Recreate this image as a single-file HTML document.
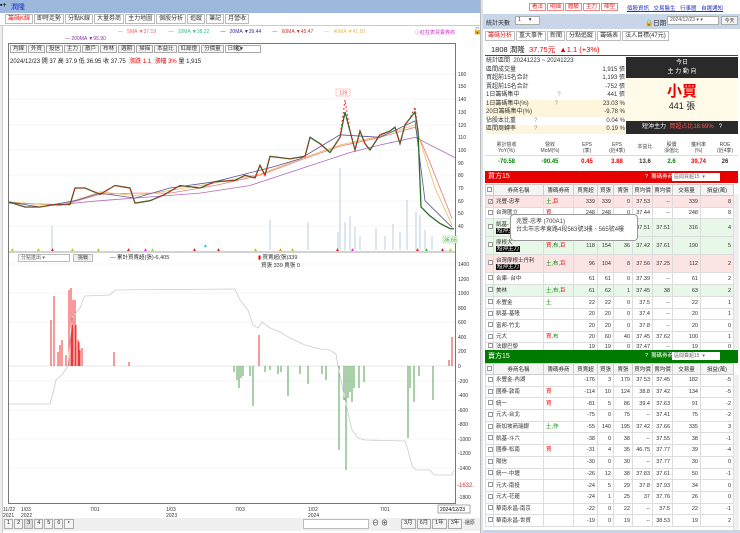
<!DOCTYPE html>
<html><head><meta charset="utf-8"><style>
*{margin:0;padding:0;box-sizing:border-box}
body{width:740px;height:533px;overflow:hidden;background:#fff;font-family:"Liberation Sans","Noto Sans CJK TC",sans-serif;font-size:6px;color:#333;position:relative}
.a{position:absolute}
.tab{display:inline-block;border:1px solid #bbb;background:#fff;padding:0 2px;height:10px;line-height:9px;font-size:6px;margin-right:1px}
.btn{display:inline-block;border:1px solid #aaa;background:#f4f4f4;padding:0 2px;height:8px;line-height:7px;font-size:5.5px;margin-right:1px}
table{border-collapse:collapse;table-layout:fixed;position:absolute;left:485px;width:248px;font-size:5.5px}
td{border:1px solid #ddd;text-align:right;padding:0 2px;white-space:nowrap;overflow:hidden;vertical-align:middle;line-height:6px}
td.l{text-align:left}
th{border:1px solid #ccc;font-weight:normal;background:#f4f4f4;height:11px}
.cb{display:inline-block;width:5px;height:5px;border:1px solid #999;background:#fff;font-size:4px;line-height:4px}
.r{color:#e00}.g{color:#080}
.bk{background:#111;color:#fff;padding:0 1px}
</style></head><body>
<div class="a" style="left:0;top:0;width:480px;height:13px;background:#9cb9dd"></div>
<div class="a" style="left:0;top:2px;font-size:7px;color:#000">▪+</div>
<div class="a" style="left:11px;top:2px;font-size:7px;color:#1a2fd0">潤隆</div>
<div class="a" style="left:5px;top:14px;"><span class="tab" style="color:#d22">籌碼K線</span><span class="tab">即時走勢</span><span class="tab">分點K線</span><span class="tab">大量券商</span><span class="tab">主力地圖</span><span class="tab">個股分析</span><span class="tab">追蹤</span><span class="tab">筆記</span><span class="tab">月營收</span></div>
<div class="a" style="left:0;top:25px;width:480px;height:1px;background:#ccc"></div>
<div class="a" style="left:0;top:26px;width:3px;height:507px;background:#eee;border-right:1px solid #ccc"></div>
<div class="a" style="left:118px;top:29px;font-size:5px;white-space:pre"><span style="color:#e66">—</span>   <span style="color:#e66">5MA ▼37.19</span>         <span style="color:#3b9">—</span>   <span style="color:#3b9">10MA ▼38.22</span>        <span style="color:#339">—</span>   <span style="color:#339">20MA ▼39.44</span>        <span style="color:#c33">—</span>   <span style="color:#c33">60MA ▼45.47</span>        <span style="color:#eb5">—</span>   <span style="color:#eb5">40MA ▼41.50</span></div>
<div class="a" style="left:415px;top:29px;font-size:5px;color:#c3c">ⓘ紅柱表買賣券商</div>
<div class="a" style="left:473px;top:27px;font-size:7px">🔓</div>
<div class="a" style="left:65px;top:36px;font-size:5px;color:#839"><span>—</span>   200MA ▼95.90</div>
<div class="a" style="left:8px;top:43px;width:448px;height:461px;border:1px solid #777"></div>
<div class="a" style="left:10px;top:45px;"><span class="btn">均線</span><span class="btn">外資</span><span class="btn">投信</span><span class="btn">主力</span><span class="btn">散戶</span><span class="btn">布林</span><span class="btn">週期</span><span class="btn">掃描</span><span class="btn">本益比</span><span class="btn">紅綠燈</span><span class="btn">分價量</span><span class="btn" style="width:36px;background:#fff">日線 ▾</span></div>
<div class="a" style="left:235px;top:44px;font-size:8px;color:#555">⚙</div>
<div class="a" style="left:10px;top:56px;font-size:6px;color:#222">2024/12/23 開 37 高 37.9 低 36.95 收 37.75 <span class="r">&nbsp;漲跌 1.1&nbsp; 漲幅 3%</span> 量 1,915</div>
<svg class="a" style="left:0;top:0" width="480" height="533">
<g stroke="#eee" stroke-width="0.6">
<line x1="9" y1="74" x2="455" y2="74"/><line x1="9" y1="99" x2="455" y2="99"/><line x1="9" y1="125" x2="455" y2="125"/><line x1="9" y1="150" x2="455" y2="150"/><line x1="9" y1="175" x2="455" y2="175"/><line x1="9" y1="201" x2="455" y2="201"/><line x1="9" y1="226" x2="455" y2="226"/>
<line x1="9" y1="264" x2="455" y2="264"/><line x1="9" y1="293" x2="455" y2="293"/><line x1="9" y1="322" x2="455" y2="322"/><line x1="9" y1="381" x2="455" y2="381"/><line x1="9" y1="410" x2="455" y2="410"/><line x1="9" y1="439" x2="455" y2="439"/><line x1="9" y1="468" x2="455" y2="468"/>
</g>
<line x1="9" y1="252" x2="455" y2="252" stroke="#888" stroke-width="0.8"/>
<g stroke="#a9c4dc" stroke-width="0.8">
<line x1="52" y1="250" x2="52" y2="226"/><line x1="270" y1="250" x2="270" y2="220"/><line x1="308" y1="250" x2="308" y2="222"/><line x1="340" y1="250" x2="340" y2="168"/><line x1="345" y1="250" x2="345" y2="222"/><line x1="350" y1="250" x2="350" y2="216"/><line x1="355" y1="250" x2="355" y2="227"/><line x1="376" y1="250" x2="376" y2="228"/><line x1="393" y1="250" x2="393" y2="224"/><line x1="407" y1="250" x2="407" y2="200"/><line x1="416" y1="250" x2="416" y2="212"/><line x1="420" y1="250" x2="420" y2="215"/><line x1="425" y1="250" x2="425" y2="230"/><line x1="432" y1="250" x2="432" y2="236"/><line x1="338" y1="250" x2="338" y2="232"/><line x1="360" y1="250" x2="360" y2="236"/><line x1="385" y1="250" x2="385" y2="236"/><line x1="400" y1="250" x2="400" y2="232"/>
</g>
<g fill="none" stroke-width="0.8">
<polyline stroke="#b06bc0" points="9,203.2 60,204.5 100,200.7 150,196.9 200,193.1 250,185.5 300,169 350,152.5 380,145 415,137.3 455,157.6"/>
<polyline stroke="#e77" points="9,202 60,205.7 100,194.3 135,193.1 170,193.1 215,185.5 260,175.3 300,160.1 340,146.2 380,137.3 415,127.2 430,162.7 452,218.4"/>
<polyline stroke="#eb5" points="9,202 60,205.7 100,191.8 135,195.6 170,190.5 215,183 260,174.1 300,158.9 340,145 380,136.1 415,124.7 435,188 452,224.8"/>
<polyline stroke="#559" points="9,202 40,207 75,200.7 100,193.1 135,198.1 170,188 215,181.7 270,167.7 300,158.9 340,134.8 380,137.3 415,120.9 425,200.7 452,227.3"/>
<polyline stroke="#2a6a2a" stroke-width="1.3" points="9,202 25,207 40,207 55,204.5 70,204.5 75,188 85,188 100,194.3 115,185.5 130,188 135,203.2 150,200.7 165,194.3 180,185.5 200,188 215,181.7 235,180.4 245,175.3 255,177.9 260,165.2 265,175.3 270,156.3 290,158.9 305,156.3 310,137.3 320,143.7 330,152.5 340,137.3 345,112 350,131 355,150 360,131 365,143.7 370,150 380,134.8 390,131 395,127.2 400,143.7 405,124.7 410,118.4 415,112 418,131 421,207 430,215.9 440,223.5 450,228.6 454,228.9"/>
<polyline stroke="#e22" stroke-width="1.2" stroke-dasharray="1.5 2.5" points="9,202 25,207 40,207 55,204.5 70,204.5 75,188 85,188 100,194.3 115,185.5 130,188 135,203.2 150,200.7 165,194.3 180,185.5 200,188 215,181.7 235,180.4 245,175.3 255,177.9 260,165.2 265,175.3 270,156.3 290,158.9 305,156.3 310,137.3 320,143.7 330,152.5 340,137.3 345,100 350,131 355,150 360,131 365,143.7 370,150 380,134.8 390,131 395,127.2 400,143.7 405,124.7 410,118.4 415,107 418,131"/>
</g>
<rect x="336" y="89" width="14" height="7" fill="#fff" stroke="#f99" stroke-width="0.5"/><text x="339" y="94.5" font-size="5" fill="#e55">139</text>
<rect x="443" y="236" width="14" height="7" fill="#efe" stroke="#9c9" stroke-width="0.5"/><text x="444" y="241.5" font-size="5" fill="#393">36.65</text>
<g font-size="5">
<text x="10" y="251" fill="#9d2">▲</text><text x="36" y="251" fill="#9d2">▲</text><text x="50" y="251" fill="#d22">▲</text><text x="70" y="251" fill="#9d2">▲</text><text x="96" y="251" fill="#9d2">▲</text><text x="126" y="251" fill="#d22">▲</text><text x="143" y="251" fill="#d3d">▲</text><text x="150" y="251" fill="#9d2">▲</text><text x="192" y="251" fill="#d22">▲</text><text x="203" y="247" fill="#3bb">▲</text><text x="216" y="251" fill="#d22">▲</text><text x="253" y="251" fill="#9d2">▲</text><text x="278" y="251" fill="#e90">▲</text><text x="290" y="251" fill="#9d2">▲</text><text x="335" y="251" fill="#d22">▲</text><text x="350" y="251" fill="#d3d">▲</text><text x="415" y="251" fill="#d22">▲</text><text x="424" y="251" fill="#3c3">▲</text><text x="440" y="251" fill="#d22">▲</text><text x="448" y="251" fill="#9d2">▲</text>
</g>
<line x1="9" y1="366" x2="455" y2="366" stroke="#ccc" stroke-width="0.5"/>
<g stroke="#e00" stroke-width="0.8">
<line x1="51" y1="366" x2="51" y2="320"/><line x1="54" y1="366" x2="54" y2="296"/><line x1="58" y1="366" x2="58" y2="352"/><line x1="60" y1="366" x2="60" y2="345"/><line x1="62" y1="366" x2="62" y2="340"/><line x1="66" y1="366" x2="66" y2="355"/><line x1="69" y1="366" x2="69" y2="290"/><line x1="71" y1="366" x2="71" y2="288"/><line x1="72" y1="366" x2="72" y2="325"/><line x1="73" y1="366" x2="73" y2="300"/><line x1="75" y1="366" x2="75" y2="300"/><line x1="76" y1="366" x2="76" y2="325"/><line x1="78" y1="366" x2="78" y2="340"/><line x1="79" y1="366" x2="79" y2="342"/><line x1="80" y1="366" x2="80" y2="350"/><line x1="82" y1="366" x2="82" y2="348"/><line x1="114" y1="366" x2="114" y2="352"/><line x1="129" y1="366" x2="129" y2="362"/><line x1="259" y1="366" x2="259" y2="335"/><line x1="452" y1="366" x2="452" y2="337"/><line x1="449" y1="366" x2="449" y2="360"/>
</g>
<g stroke="#2a8a2a" stroke-width="0.8">
<line x1="234" y1="366" x2="234" y2="372"/><line x1="237" y1="366" x2="237" y2="380"/><line x1="239" y1="366" x2="239" y2="388"/><line x1="241" y1="366" x2="241" y2="378"/><line x1="243" y1="366" x2="243" y2="376"/><line x1="250" y1="366" x2="250" y2="376"/><line x1="253" y1="366" x2="253" y2="406"/><line x1="265" y1="366" x2="265" y2="372"/><line x1="270" y1="366" x2="270" y2="370"/><line x1="278" y1="366" x2="278" y2="374"/><line x1="281" y1="366" x2="281" y2="372"/><line x1="288" y1="366" x2="288" y2="396"/><line x1="300" y1="366" x2="300" y2="374"/><line x1="308" y1="366" x2="308" y2="384"/><line x1="322" y1="366" x2="322" y2="374"/><line x1="326" y1="366" x2="326" y2="380"/><line x1="339" y1="366" x2="339" y2="450"/><line x1="344" y1="366" x2="344" y2="400"/><line x1="346" y1="366" x2="346" y2="470"/><line x1="348" y1="366" x2="348" y2="398"/><line x1="350" y1="366" x2="350" y2="392"/><line x1="352" y1="366" x2="352" y2="402"/><line x1="354" y1="366" x2="354" y2="388"/><line x1="359" y1="366" x2="359" y2="388"/><line x1="364" y1="366" x2="364" y2="382"/><line x1="408" y1="366" x2="408" y2="438"/><line x1="410" y1="366" x2="410" y2="388"/><line x1="414" y1="366" x2="414" y2="402"/><line x1="419" y1="366" x2="419" y2="376"/><line x1="433" y1="366" x2="433" y2="400"/>
</g>
<polyline fill="none" stroke="#ccc" stroke-width="0.8" points="9,404 50,404 53,393 56,380 62,375 68,366 72,318 80,308 83,300 85,296 110,295 115,290 235,289 240,300 248,310 253,325 258,328 262,322 270,328 280,332 290,338 305,345 320,349 330,350 336,354 338,366 346,404 352,430 358,438 365,440 405,441 408,450 412,466 416,470 430,470 434,475 452,475 454,470"/>
<g font-size="5" fill="#333">
<text x="458" y="76">160</text><text x="458" y="88">150</text><text x="458" y="101">140</text><text x="458" y="114">130</text><text x="458" y="127">120</text><text x="458" y="139">110</text><text x="458" y="152">100</text><text x="458" y="165">90</text><text x="458" y="177">80</text><text x="458" y="190">70</text><text x="458" y="203">60</text><text x="458" y="215">50</text><text x="458" y="228">40</text>
<text x="458" y="266">1400</text><text x="458" y="281">1200</text><text x="458" y="295">1000</text><text x="458" y="310">800</text><text x="458" y="324">600</text><text x="458" y="339">400</text><text x="458" y="353">200</text><text x="458" y="368">0</text><text x="458" y="383">-200</text><text x="458" y="397">-400</text><text x="458" y="412">-600</text><text x="458" y="426">-800</text><text x="458" y="441">-1000</text><text x="458" y="455">-1200</text><text x="458" y="470">-1400</text><text x="458" y="499">-1800</text>
<text x="457" y="487" fill="#c33" font-size="6">-1632.</text>
<text x="3" y="511">11/22</text><text x="3" y="517">2021</text><text x="21" y="511">1/03</text><text x="21" y="517">2022</text><text x="90" y="511">7/01</text><text x="166" y="511">1/03</text><text x="166" y="517">2023</text><text x="235" y="511">7/03</text><text x="308" y="511">1/02</text><text x="308" y="517">2024</text><text x="380" y="511">7/01</text>
</g>
<rect x="438" y="505" width="32" height="8" fill="#fff" stroke="#555" stroke-width="0.5"/><text x="440" y="511" font-size="5">2024/12/23</text>
</svg>
<div class="a" style="left:18px;top:254px;width:52px;height:8px;border:1px solid #bbb;font-size:5px;padding-left:2px;line-height:7px;color:#555">分點進出 ▾</div>
<div class="a" style="left:73px;top:254px;width:20px;height:8px;border:1px solid #bbb;background:#f0f0f0;font-size:5px;line-height:7px;text-align:center">挑戰</div>
<div class="a" style="left:110px;top:253px;font-size:5.5px">— 累計買賣超(張)-6,405</div>
<div class="a" style="left:258px;top:253px;font-size:5.5px"><span class="r">▮</span> 買賣超(張)339<br>&nbsp;&nbsp;買張 339 賣張 0</div>
<div class="a" style="left:3px;top:518px;width:477px;height:13px;background:#f0f0f0"></div>
<div class="a" style="left:4px;top:519px;"><span class="btn" style="height:10px">1</span><span class="btn" style="height:10px">2</span><span class="btn" style="height:10px;background:#ddd">3</span><span class="btn" style="height:10px">4</span><span class="btn" style="height:10px">5</span><span class="btn" style="height:10px">6</span><span class="btn" style="height:10px">‣</span></div>
<div class="a" style="left:303px;top:519px;width:66px;height:10px;border:1px solid #bbb;background:#fff"></div>
<div class="a" style="left:372px;top:518px;font-size:7px">⊖ ⊕</div>
<div class="a" style="left:401px;top:519px;"><span class="btn" style="height:10px">3月</span><span class="btn" style="height:10px">6月</span><span class="btn" style="height:10px">1年</span><span class="btn" style="height:10px">3年</span><span style="font-size:5px">·還原</span></div>
<div class="a" style="left:480px;top:0;width:3px;height:533px;background:#dde3ec;border-left:1px solid #bbb"></div>
<div class="a" style="left:529px;top:3px;color:#d22"><span class="btn" style="border-color:#e88;background:#fff">看法</span><span class="btn" style="border-color:#e88;background:#fff">明細</span><span class="btn" style="border-color:#e88;background:#fff">體驗</span><span class="btn" style="border-color:#e88;background:#fff">主力</span><span class="btn" style="border-color:#e88;background:#fff">陣型</span></div>
<div class="a" style="left:627px;top:4px;font-size:5.5px;color:#23b;text-decoration:underline;word-spacing:3px">個股資訊 交易醫生 行事曆 自選通知</div>
<div class="a" style="left:483px;top:14px;width:257px;height:15px;background:#c8d6e8"></div>
<div class="a" style="left:486px;top:18px;font-size:6px">統計天數</div>
<div class="a" style="left:515px;top:16px;width:25px;height:9px;background:#fff;border:1px solid #aaa;font-size:5.5px;padding-left:2px">1 &nbsp;&nbsp;&nbsp;&nbsp;▾</div>
<div class="a" style="left:645px;top:17px;font-size:6.5px">🔒日期</div>
<div class="a" style="left:667px;top:16px;width:52px;height:9px;background:#fff;border:1px solid #aaa;font-size:5px;padding-left:2px;color:#555">2024/12/23 ▾ ▾</div>
<div class="a" style="left:721px;top:16px;width:17px;height:9px;background:#f4f4f4;border:1px solid #aaa;font-size:5px;text-align:center">今天</div>
<div class="a" style="left:485px;top:31px;"><span class="tab" style="color:#d22">籌碼分析</span><span class="tab">重大事件</span><span class="tab">新聞</span><span class="tab">分點追蹤</span><span class="tab">籌碼表</span><span class="tab">法人目標(47元)</span></div>
<div class="a" style="left:491px;top:44px;font-size:7.5px;color:#222">1808 潤隆 <span class="r">&nbsp;37.75元 &nbsp;▲1.1 (+3%)</span></div>
<div class="a" style="left:485px;top:55px;width:253px;height:1px;background:#e00"></div>
<div class="a" style="left:486px;top:57px;width:139px;font-size:6px;line-height:8.5px">
<div>統計區間 &nbsp;20241223 ~ 20241223</div>
<div>區間成交量<span style="float:right">1,915 張</span></div>
<div>買超前15名合計<span style="float:right">1,193 張</span></div>
<div>賣超前15名合計<span style="float:right">-752 張</span></div>
<div>1日籌碼集中<span style="margin-left:38px;color:#999">?</span><span style="float:right">441 張</span></div>
<div style="background:#fdf6dc">1日籌碼集中(%)<span style="margin-left:26px;color:#999">?</span><span style="float:right">23.03 %</span></div>
<div style="background:#fdf6dc">20日籌碼集中(%)<span style="float:right">-9.78 %</span></div>
<div>佔股本比重<span style="margin-left:18px;color:#999">?</span><span style="float:right">0.04 %</span></div>
<div style="background:#fdf6dc">區間周轉率<span style="margin-left:18px;color:#999">?</span><span style="float:right">0.19 %</span></div>
</div>
<div class="a" style="left:626px;top:57px;width:112px;height:21px;background:#2a2a2a;color:#fff;text-align:center;font-size:6px;line-height:9px;padding-top:2px">今日<br>主 力 動 向</div>
<div class="a" style="left:626px;top:78px;width:112px;height:43px;background:#fffbe8;text-align:center">
<div style="color:#e00;font-size:15px;line-height:18px;margin-top:5px;font-weight:bold">小買</div>
<div style="font-size:9px;line-height:11px;color:#222">441 張</div></div>
<div class="a" style="left:626px;top:121px;width:112px;height:13px;background:#2a2a2a;color:#fff;font-size:6px;line-height:13px;padding-left:16px">短沖主力 &nbsp;<span style="color:#f55">買超占比18.69%</span> &nbsp;&nbsp;?</div>
<div class="a" style="left:485px;top:139px;width:253px;height:31px;font-size:5px;text-align:center">
<div style="display:flex;height:17px;line-height:6px;border-bottom:1px solid #ddd;color:#444">
<div style="width:43px;padding-top:3px">累計營收<br>YoY(%)</div><div style="width:44px;padding-top:3px">營收<br>MoM(%)</div><div style="width:30px;padding-top:3px">EPS<br>(季)</div><div style="width:30px;padding-top:3px">EPS<br>(近4季)</div><div style="width:26px;padding-top:5px">本益比</div><div style="width:27px;padding-top:3px">股價<br>淨值比</div><div style="width:27px;padding-top:3px">獲利率<br>(%)</div><div style="width:26px;padding-top:3px">ROE<br>(近4季)</div></div>
<div style="display:flex;font-size:6px;font-weight:bold;line-height:12px">
<div style="width:43px" class="g">-70.58</div><div style="width:44px" class="g">-90.45</div><div style="width:30px" class="r">0.45</div><div style="width:30px" class="r">3.88</div><div style="width:26px">13.6</div><div style="width:27px" class="g">2.6</div><div style="width:27px" class="r">39.74</div><div style="width:26px">26</div></div></div>
<div class="a" style="left:485px;top:171px;width:253px;height:12px;background:#e60000;color:#fff;font-size:7px;line-height:12px;padding-left:3px">買方15<span style="position:absolute;left:160px;font-size:5.5px">? &nbsp;籌碼券商:</span></div>
<div class="a" style="left:672px;top:173px;width:48px;height:8px;background:#fff;font-size:5px;color:#666;padding-left:2px">區間買超15 &nbsp;▾</div>
<table style="top:184px">
<colgroup><col style="width:8px"><col style="width:50px"><col style="width:30px"><col style="width:24px"><col style="width:16px"><col style="width:19px"><col style="width:20px"><col style="width:20px"><col style="width:28px"><col style="width:33px"></colgroup>
<tr><th><span class="cb"></span></th><th>券商名稱</th><th>籌碼券商</th><th>買賣超</th><th>買張</th><th>賣張</th><th>買均價</th><th>賣均價</th><th>交易量</th><th>損益(萬)</th></tr>
<tr style="height:12px;background:#fde4e4"><td><span class="cb">✓</span></td><td class="l">兆豐-忠孝</td><td class="l"><span class="g">土</span><span class="r">,巨</span></td><td>339</td><td>339</td><td>0</td><td>37.53</td><td>--</td><td>339</td><td>8</td></tr>
<tr style="height:11px"><td><span class="cb"></span></td><td class="l">台灣匯立</td><td class="l r">買</td><td>248</td><td>248</td><td>0</td><td>37.44</td><td>--</td><td>248</td><td>8</td></tr>
<tr style="height:18px;background:#e8f8e8"><td><span class="cb"></span></td><td class="l">凱基-<br><span class="bk">短沖主</span></td><td></td><td></td><td></td><td></td><td>37.51</td><td>37.51</td><td>316</td><td>4</td></tr>
<tr style="height:18px;background:#e8f8e8"><td><span class="cb"></span></td><td class="l">摩根大<br><span class="bk">短沖主力</span></td><td class="l"><span class="r">買</span><span class="g">,布,</span><span class="r">巨</span></td><td>118</td><td>154</td><td>36</td><td>37.42</td><td>37.61</td><td>190</td><td>5</td></tr>
<tr style="height:18px;background:#fde4e4"><td><span class="cb"></span></td><td class="l">台灣摩根士丹利<br><span class="bk">短沖主力</span></td><td class="l"><span class="g">土,布,</span><span class="r">巨</span></td><td>96</td><td>104</td><td>8</td><td>37.56</td><td>37.25</td><td>112</td><td>2</td></tr>
<tr style="height:12px"><td><span class="cb"></span></td><td class="l">合庫- 台中</td><td></td><td>61</td><td>61</td><td>0</td><td>37.39</td><td>--</td><td>61</td><td>2</td></tr>
<tr style="height:12px;background:#e8f8e8"><td><span class="cb"></span></td><td class="l">美林</td><td class="l"><span class="g">土,布,</span><span class="r">巨</span></td><td>61</td><td>62</td><td>1</td><td>37.45</td><td>38</td><td>63</td><td>2</td></tr>
<tr style="height:12px"><td><span class="cb"></span></td><td class="l">永豐金</td><td class="l g">土</td><td>22</td><td>22</td><td>0</td><td>37.5</td><td>--</td><td>22</td><td>1</td></tr>
<tr style="height:11px"><td><span class="cb"></span></td><td class="l">凱基-基隆</td><td></td><td>20</td><td>20</td><td>0</td><td>37.4</td><td>--</td><td>20</td><td>1</td></tr>
<tr style="height:12px"><td><span class="cb"></span></td><td class="l">富邦-竹北</td><td></td><td>20</td><td>20</td><td>0</td><td>37.8</td><td>--</td><td>20</td><td>0</td></tr>
<tr style="height:11px"><td><span class="cb"></span></td><td class="l">元大</td><td class="l"><span class="r">買</span><span class="g">,布</span></td><td>20</td><td>60</td><td>40</td><td>37.45</td><td>37.62</td><td>100</td><td>1</td></tr>
<tr style="height:8px"><td><span class="cb"></span></td><td class="l">法銀巴黎</td><td></td><td>19</td><td>19</td><td>0</td><td>37.47</td><td>--</td><td>19</td><td>0</td></tr>
</table>
<div class="a" style="left:510px;top:214px;width:128px;height:27px;background:#fff;border:1px solid #999;border-radius:4px;font-size:6px;line-height:8px;padding:3px 5px;color:#444">兆豐-忠孝 (700A1)<br>台北市忠孝東路4段563號3樓、565號4樓</div>
<div class="a" style="left:485px;top:350px;width:253px;height:13px;background:#007a00;color:#fff;font-size:7px;line-height:13px;padding-left:3px">賣方15<span style="position:absolute;left:160px;font-size:5.5px">? &nbsp;籌碼券商:</span></div>
<div class="a" style="left:672px;top:352px;width:48px;height:8px;background:#fff;font-size:5px;color:#666;padding-left:2px">區間賣超15 &nbsp;▾</div>
<table style="top:363px">
<colgroup><col style="width:8px"><col style="width:50px"><col style="width:30px"><col style="width:24px"><col style="width:16px"><col style="width:19px"><col style="width:20px"><col style="width:20px"><col style="width:28px"><col style="width:33px"></colgroup>
<tr><th><span class="cb"></span></th><th>券商名稱</th><th>籌碼券商</th><th>買賣超</th><th>買張</th><th>賣張</th><th>買均價</th><th>賣均價</th><th>交易量</th><th>損益(萬)</th></tr>
<tr style="height:11.7px"><td><span class="cb"></span></td><td class="l">永豐金-內湖</td><td></td><td>-176</td><td>3</td><td>179</td><td>37.53</td><td>37.45</td><td>182</td><td>-5</td></tr>
<tr style="height:11.7px"><td><span class="cb"></span></td><td class="l">國泰-敦南</td><td class="l r">買</td><td>-114</td><td>10</td><td>124</td><td>38.8</td><td>37.42</td><td>134</td><td>-5</td></tr>
<tr style="height:11.7px"><td><span class="cb"></span></td><td class="l">統一</td><td class="l r">買</td><td>-81</td><td>5</td><td>86</td><td>39.4</td><td>37.63</td><td>91</td><td>-2</td></tr>
<tr style="height:11.7px"><td><span class="cb"></span></td><td class="l">元大-台北</td><td></td><td>-75</td><td>0</td><td>75</td><td>--</td><td>37.41</td><td>75</td><td>-2</td></tr>
<tr style="height:11.7px"><td><span class="cb"></span></td><td class="l">新加坡商瑞銀</td><td class="l g">土,作</td><td>-55</td><td>140</td><td>195</td><td>37.42</td><td>37.66</td><td>335</td><td>3</td></tr>
<tr style="height:11.7px"><td><span class="cb"></span></td><td class="l">凱基-斗六</td><td></td><td>-38</td><td>0</td><td>38</td><td>--</td><td>37.55</td><td>38</td><td>-1</td></tr>
<tr style="height:11.7px"><td><span class="cb"></span></td><td class="l">國泰-松南</td><td class="l r">買</td><td>-31</td><td>4</td><td>35</td><td>46.75</td><td>37.77</td><td>39</td><td>-4</td></tr>
<tr style="height:11.7px"><td><span class="cb"></span></td><td class="l">陽信</td><td></td><td>-30</td><td>0</td><td>30</td><td>--</td><td>37.77</td><td>30</td><td>0</td></tr>
<tr style="height:11.7px"><td><span class="cb"></span></td><td class="l">統一-中壢</td><td></td><td>-26</td><td>12</td><td>38</td><td>37.83</td><td>37.61</td><td>50</td><td>-1</td></tr>
<tr style="height:11.7px"><td><span class="cb"></span></td><td class="l">元大-南投</td><td></td><td>-24</td><td>5</td><td>29</td><td>37.8</td><td>37.93</td><td>34</td><td>0</td></tr>
<tr style="height:11.7px"><td><span class="cb"></span></td><td class="l">元大-花蓮</td><td></td><td>-24</td><td>1</td><td>25</td><td>37</td><td>37.76</td><td>26</td><td>0</td></tr>
<tr style="height:11.7px"><td><span class="cb"></span></td><td class="l">華南永昌-南京</td><td></td><td>-22</td><td>0</td><td>22</td><td>--</td><td>37.5</td><td>22</td><td>-1</td></tr>
<tr style="height:11.7px"><td><span class="cb"></span></td><td class="l">華南永昌-世貿</td><td></td><td>-19</td><td>0</td><td>19</td><td>--</td><td>38.53</td><td>19</td><td>2</td></tr>
</table>
<div class="a" style="left:733px;top:194px;width:6px;height:155px;background:#f0f0f0;border-left:1px solid #ddd"></div>
<div class="a" style="left:733px;top:375px;width:6px;height:155px;background:#f0f0f0;border-left:1px solid #ddd"></div>
<div class="a" style="left:483px;top:530px;width:257px;height:3px;background:#c8d6e8"></div>
</body></html>
